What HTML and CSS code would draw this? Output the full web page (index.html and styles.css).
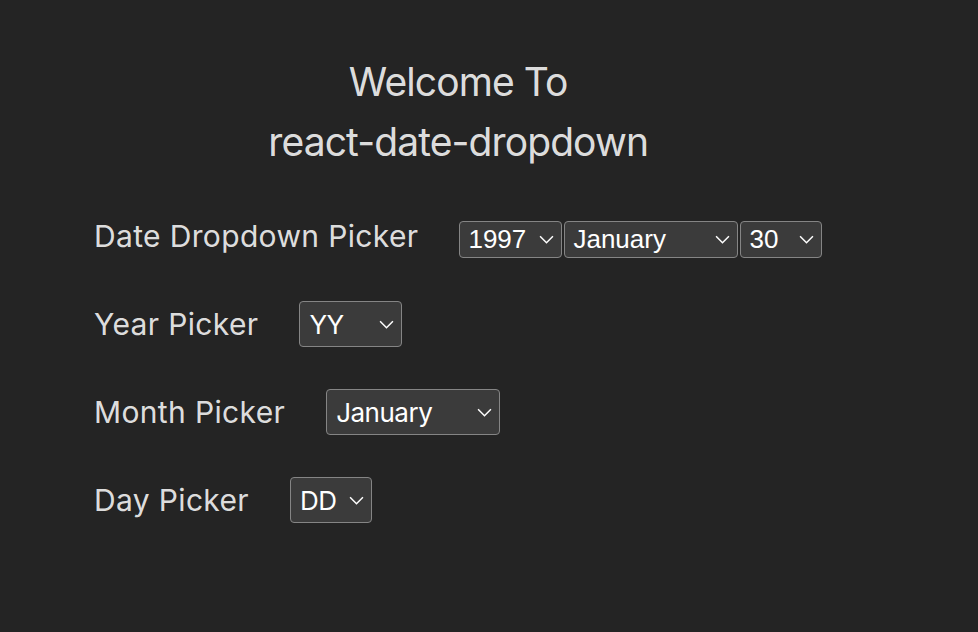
FILE: index.html
```html
<!DOCTYPE html>
<html lang="en">
<head>
  <meta charset="UTF-8">
  <meta name="viewport" content="width=device-width, initial-scale=1.0">
  <title>react-date-dropdown</title>
  <link rel="stylesheet" href="styles.css">
</head>
<body>
  <div class="app">
    <h1 class="title">Welcome To<br>react-date-dropdown</h1>

    <div class="row">
      <label class="label">Date Dropdown Picker</label>
      <div class="picker-group">
        <div class="select-wrap small year">
          <select class="select"><option>1997</option></select>
          <svg class="chevron" viewBox="0 0 14 8"><path d="M1 1l6 6 6-6"/></svg>
        </div>
        <div class="select-wrap small month">
          <select class="select"><option>January</option></select>
          <svg class="chevron" viewBox="0 0 14 8"><path d="M1 1l6 6 6-6"/></svg>
        </div>
        <div class="select-wrap small day">
          <select class="select"><option>30</option></select>
          <svg class="chevron" viewBox="0 0 14 8"><path d="M1 1l6 6 6-6"/></svg>
        </div>
      </div>
    </div>

    <div class="row">
      <label class="label">Year Picker</label>
      <div class="select-wrap year">
        <select class="select"><option>YY</option></select>
        <svg class="chevron" viewBox="0 0 14 8"><path d="M1 1l6 6 6-6"/></svg>
      </div>
    </div>

    <div class="row">
      <label class="label">Month Picker</label>
      <div class="select-wrap month">
        <select class="select"><option>January</option></select>
        <svg class="chevron" viewBox="0 0 14 8"><path d="M1 1l6 6 6-6"/></svg>
      </div>
    </div>

    <div class="row">
      <label class="label">Day Picker</label>
      <div class="select-wrap day">
        <select class="select"><option>DD</option></select>
        <svg class="chevron" viewBox="0 0 14 8"><path d="M1 1l6 6 6-6"/></svg>
      </div>
    </div>
  </div>
</body>
</html>
```

FILE: styles.css
```css
body {
  margin: 0;
  background: #242424;
  color: rgba(255, 255, 255, 0.87);
  font-family: Inter, "Noto Sans", sans-serif;
}

.app {
  width: fit-content;
  padding: 52px 0 0 94px;
}

.title {
  margin: 0 0 41px;
  font-size: 39px;
  font-weight: 400;
  letter-spacing: -0.9px;
  line-height: 60px;
  text-align: center;
}

.row {
  display: flex;
  align-items: center;
  height: 46px;
  margin-bottom: 42px;
}

.label {
  font-size: 30px;
  letter-spacing: 0.35px;
  margin-right: 41px;
}

.picker-group {
  display: flex;
  gap: 2px;
  margin-top: 6px;
}

.select-wrap {
  position: relative;
  height: 46px;
}

.select-wrap.small {
  height: 37px;
}

.year { width: 103px; }
.month { width: 174px; }
.day { width: 82px; }

.select {
  appearance: none;
  box-sizing: border-box;
  width: 100%;
  height: 100%;
  margin: 0;
  padding: 0 0 0 9px;
  background: #3b3b3b;
  color: #fff;
  border: 1px solid #858585;
  border-radius: 4px;
  font-family: Inter, "Noto Sans", sans-serif;
  font-size: 26px;
  letter-spacing: -0.5px;
}

.small .select {
  font-family: "Liberation Sans", Arial, sans-serif;
  font-size: 26px;
  letter-spacing: 0;
  padding-left: 8px;
}

.chevron {
  position: absolute;
  right: 8px;
  top: 50%;
  width: 15px;
  height: 9px;
  margin-top: -4px;
  fill: none;
  stroke: #fff;
  stroke-width: 1.4;
  pointer-events: none;
}
```
